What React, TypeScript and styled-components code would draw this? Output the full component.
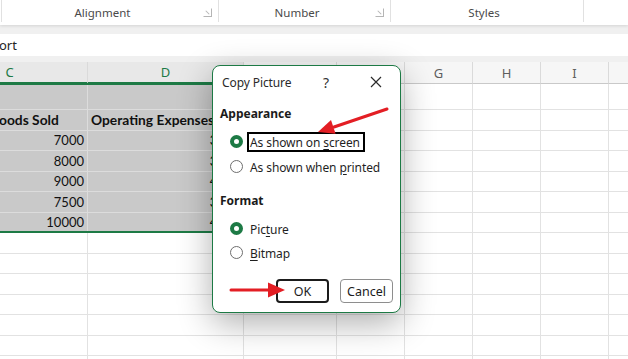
import styled, { createGlobalStyle } from "styled-components";

const GREEN = "#1d7a45";
const UI_FONT = `"Noto Sans", "Open Sans", sans-serif`;
const CELL_FONT = `Lato, "Liberation Sans", sans-serif`;

const GlobalStyle = createGlobalStyle`
    html, body {
        margin: 0;
        padding: 0;
        width: 628px;
        height: 359px;
        overflow: hidden;
        background: #f0f0f0;
    }
`;

const Page = styled.div`
    position: relative;
    width: 628px;
    height: 359px;
    overflow: hidden;
    display: flex;
    flex-direction: column;
    font-family: ${UI_FONT};
`;

const Ribbon = styled.div`
    height: 25px;
    flex: none;
    display: flex;
    background: #ffffff;
    box-shadow: 0 1px 3px rgba(0, 0, 0, 0.12);
    padding-left: 1px;
    z-index: 1;
`;

const RibbonGroup = styled.div<{ $width: number }>`
    width: ${(p) => p.$width}px;
    flex: none;
    display: flex;
    align-items: center;
    border-left: 1px solid #e1e1e1;
    margin: 0 0 3px;
    padding-right: 6px;
    box-sizing: border-box;
`;

const RibbonLabel = styled.span`
    flex: 1;
    text-align: center;
    font-size: 11.5px;
    color: #4a4a4a;
    padding-top: 2px;
`;

const Launcher = styled.span`
    width: 7px;
    height: 7px;
    border: 1px solid #b5b5b5;
    border-top-color: transparent;
    border-left-color: transparent;
    position: relative;
    margin-top: 3px;

    &::after {
        content: "";
        position: absolute;
        left: 1px;
        top: 3px;
        width: 5px;
        height: 1px;
        background: #b5b5b5;
        transform: rotate(45deg);
    }
`;

const FormulaBar = styled.div`
    height: 22px;
    flex: none;
    margin-top: 9px;
    background: #ffffff;
    display: flex;
    align-items: center;
    font-size: 13px;
    color: #242424;
    text-indent: -1px;
`;

const Sheet = styled.div`
    position: relative;
    margin-top: 6px;
    margin-left: -68px;
    flex: 1;
    background: #ffffff;
`;

const Row = styled.div<{ $height: number }>`
    display: flex;
    height: ${(p) => p.$height}px;
`;

const HeaderCell = styled.div<{ $width: number; $selected?: boolean }>`
    width: ${(p) => p.$width}px;
    flex: none;
    box-sizing: border-box;
    display: flex;
    align-items: center;
    justify-content: center;
    font-size: 13px;
    background: ${(p) => (p.$selected ? "#e8e8e8" : "#f6f6f6")};
    color: ${(p) => (p.$selected ? GREEN : "#5e5e5e")};
    border-right: 1px solid #dadada;
    border-bottom: ${(p) => (p.$selected ? `2px solid ${GREEN}` : "1px solid #c9c9c9")};
`;

const Cell = styled.div<{
    $width: number;
    $selected?: boolean;
    $bold?: boolean;
    $right?: boolean;
    $indent?: number;
}>`
    width: ${(p) => p.$width}px;
    flex: none;
    box-sizing: border-box;
    display: flex;
    align-items: center;
    justify-content: ${(p) => (p.$right ? "flex-end" : "flex-start")};
    padding: 0 3px 0 ${(p) => p.$indent ?? 3}px;
    white-space: nowrap;
    overflow: visible;
    font-family: ${CELL_FONT};
    font-size: ${(p) => (p.$bold ? 13.8 : 13)}px;
    font-weight: ${(p) => (p.$bold ? 700 : 400)};
    color: #111111;
    background: ${(p) => (p.$selected ? "#c9c9c9" : "#ffffff")};
    border-right: 1px solid ${(p) => (p.$selected ? "#dcdcdc" : "#e2e2e2")};
    border-bottom: 1px solid ${(p) => (p.$selected ? "#dcdcdc" : "#e2e2e2")};
`;

const SelectionFrame = styled.div`
    position: absolute;
    left: 2px;
    top: 21px;
    width: 338px;
    height: 150px;
    border: 2px solid ${GREEN};
    box-sizing: border-box;
    pointer-events: none;
`;

const Dialog = styled.div`
    position: absolute;
    left: 212px;
    top: 65px;
    width: 189px;
    height: 248px;
    box-sizing: border-box;
    background: #ffffff;
    border: 1.5px solid ${GREEN};
    border-radius: 8px;
    box-shadow: 0 10px 34px rgba(0, 0, 0, 0.32);
    display: flex;
    flex-direction: column;
    padding: 0 0 0 7px;
    color: #1b1b1b;
    z-index: 2;
`;

const TitleBar = styled.div`
    height: 32px;
    display: flex;
    align-items: center;
    padding-left: 2px;
    padding-right: 3px;
`;

const Title = styled.span`
    flex: 1;
    font-size: 12px;
    letter-spacing: -0.1px;
    color: #2a2a2a;
`;

const TitleButton = styled.span<{ $gap?: number }>`
    width: 42px;
    height: 24px;
    display: flex;
    align-items: center;
    justify-content: center;
    margin-right: ${(p) => p.$gap ?? 0}px;
    font-size: 14px;
    color: #333333;
`;

const Heading = styled.div<{ $top: number }>`
    margin-top: ${(p) => p.$top}px;
    height: 20px;
    display: flex;
    align-items: center;
    font-size: 12px;
    font-weight: 700;
`;

const Option = styled.div<{ $top: number }>`
    margin-top: ${(p) => p.$top}px;
    height: 20px;
    display: flex;
    align-items: center;
    padding-left: 10px;
    gap: 4px;
`;

const Radio = styled.span<{ $checked?: boolean }>`
    width: 13px;
    height: 13px;
    flex: none;
    box-sizing: border-box;
    border-radius: 50%;
    background: #ffffff;
    border: ${(p) => (p.$checked ? `4px solid ${GREEN}` : "1px solid #6e6e6e")};
    margin-top: -1px;
`;

const OptionLabel = styled.span<{ $focused?: boolean }>`
    height: 20px;
    box-sizing: border-box;
    display: flex;
    align-items: center;
    padding: 0 3px 0 1px;
    border: 2px solid ${(p) => (p.$focused ? "#000000" : "transparent")};
    font-size: 12px;
    letter-spacing: -0.1px;
    color: #1f1f1f;
    white-space: nowrap;

    u {
        text-underline-offset: 2px;
        text-decoration-thickness: 1px;
    }
`;

const ButtonRow = styled.div`
    margin-top: 16px;
    display: flex;
    gap: 11px;
    padding-left: 56px;
`;

const DialogButton = styled.span<{ $primary?: boolean }>`
    width: 53px;
    height: 24px;
    box-sizing: border-box;
    display: flex;
    align-items: center;
    justify-content: center;
    border-radius: 4px;
    font-size: 12.5px;
    color: #1b1b1b;
    border: ${(p) => (p.$primary ? "2px solid #1b1b1b" : "1px solid #8e8e8e")};
`;

const Annotations = styled.svg`
    position: absolute;
    left: 0;
    top: 0;
    z-index: 3;
    pointer-events: none;
`;

const columns = [
    { letter: "C", width: 156 },
    { letter: "D", width: 156 },
    { letter: "E", width: 93 },
    { letter: "F", width: 68 },
    { letter: "G", width: 68 },
    { letter: "H", width: 68 },
    { letter: "I", width: 68 },
    { letter: "", width: 68 },
];

const tableRows: string[][] = [
    ["", "", ""],
    ["oods Sold", "Operating Expenses", "Net Profit"],
    ["7000", "3000", "5000"],
    ["8000", "3500", "6500"],
    ["9000", "4000", "7000"],
    ["7500", "3200", "4300"],
    ["10000", "4500", "8500"],
];

const emptyRows = 7;

const CloseIcon = () => (
    <svg width="12" height="12" viewBox="0 0 12 12">
        <path d="M1 1 L11 11 M11 1 L1 11" stroke="#2b2b2b" strokeWidth="1.2" fill="none" />
    </svg>
);

export default function App() {
    return (
        <Page>
            <GlobalStyle />
            <Ribbon>
                <RibbonGroup $width={217}>
                    <RibbonLabel>Alignment</RibbonLabel>
                    <Launcher />
                </RibbonGroup>
                <RibbonGroup $width={172}>
                    <RibbonLabel>Number</RibbonLabel>
                    <Launcher />
                </RibbonGroup>
                <RibbonGroup $width={193}>
                    <RibbonLabel>Styles</RibbonLabel>
                </RibbonGroup>
                <RibbonGroup $width={50} />
            </Ribbon>

            <FormulaBar>ort</FormulaBar>

            <Sheet>
                <Row $height={22}>
                    {columns.map((c, i) => (
                        <HeaderCell key={i} $width={c.width} $selected={i < 2}>
                            {c.letter}
                        </HeaderCell>
                    ))}
                </Row>
                {tableRows.map((values, r) => (
                    <Row key={r} $height={r === 0 ? 26 : 20.5}>
                        {columns.map((c, i) => (
                            <Cell
                                key={i}
                                $width={c.width}
                                $selected={i < 3}
                                $bold={r === 1}
                                $right={r > 1}
                                $indent={r === 1 && i === 0 ? 67 : 3}
                            >
                                {values[i] ?? ""}
                            </Cell>
                        ))}
                    </Row>
                ))}
                {Array.from({ length: emptyRows }).map((_, r) => (
                    <Row key={`e${r}`} $height={20.5}>
                        {columns.map((c, i) => (
                            <Cell key={i} $width={c.width} />
                        ))}
                    </Row>
                ))}
                <SelectionFrame />
            </Sheet>

            <Dialog>
                <TitleBar>
                    <Title>Copy Picture</Title>
                    <TitleButton $gap={8}>?</TitleButton>
                    <TitleButton>
                        <CloseIcon />
                    </TitleButton>
                </TitleBar>

                <Heading $top={5}>Appearance</Heading>
                <Option $top={9}>
                    <Radio $checked />
                    <OptionLabel $focused>
                        As shown on&nbsp;<u>s</u>creen
                    </OptionLabel>
                </Option>
                <Option $top={5}>
                    <Radio />
                    <OptionLabel>
                        As shown when&nbsp;<u>p</u>rinted
                    </OptionLabel>
                </Option>

                <Heading $top={13}>Format</Heading>
                <Option $top={9}>
                    <Radio $checked />
                    <OptionLabel>
                        Pic<u>t</u>ure
                    </OptionLabel>
                </Option>
                <Option $top={4}>
                    <Radio />
                    <OptionLabel>
                        <u>B</u>itmap
                    </OptionLabel>
                </Option>

                <ButtonRow>
                    <DialogButton $primary>OK</DialogButton>
                    <DialogButton>Cancel</DialogButton>
                </ButtonRow>
            </Dialog>

            <Annotations width="628" height="359" viewBox="0 0 628 359">
                <line x1="387" y1="109" x2="334" y2="127" stroke="#e31e24" strokeWidth="3" strokeLinecap="round" />
                <polygon points="318,132 335.6,133.8 331,120" fill="#e31e24" />
                <line x1="231" y1="290" x2="270" y2="290" stroke="#e31e24" strokeWidth="3" strokeLinecap="round" />
                <polygon points="285,290 268,282.5 268,297.5" fill="#e31e24" />
            </Annotations>
        </Page>
    );
}
